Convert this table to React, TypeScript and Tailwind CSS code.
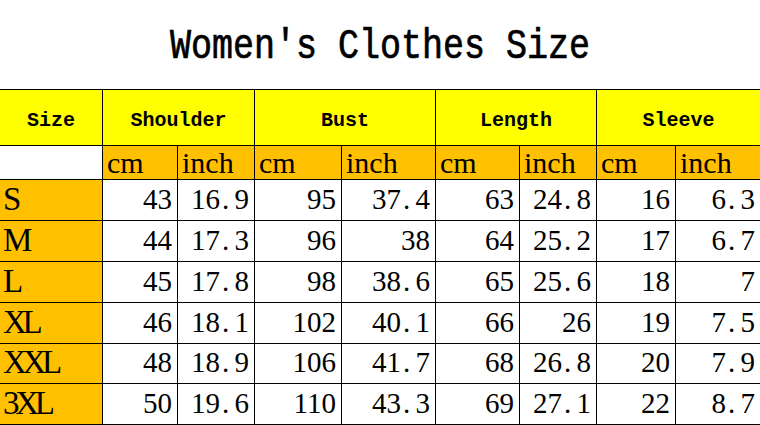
import React from 'react';

const rows: string[][] = [
  ['S', '43', '16.9', '95', '37.4', '63', '24.8', '16', '6.3'],
  ['M', '44', '17.3', '96', '38', '64', '25.2', '17', '6.7'],
  ['L', '45', '17.8', '98', '38.6', '65', '25.6', '18', '7'],
  ['XL', '46', '18.1', '102', '40.1', '66', '26', '19', '7.5'],
  ['XXL', '48', '18.9', '106', '41.7', '68', '26.8', '20', '7.9'],
  ['3XL', '50', '19.6', '110', '43.3', '69', '27.1', '22', '8.7'],
];

const groups = ['Shoulder', 'Bust', 'Length', 'Sleeve'];

const serif = "font-['Liberation_Serif',serif]";
const mono = "font-['Liberation_Mono',monospace]";

// full-width style period, like the original sheet font
function Num({ value }: { value: string }) {
  const [a, b] = value.split('.');
  return (
    <span>
      {a}
      {b !== undefined && (
        <>
          <span className="inline-block w-[0.5em] text-left pl-[2px]">.</span>
          {b}
        </>
      )}
    </span>
  );
}

export default function App() {
  return (
    <div className="w-[760px] h-[425px] overflow-hidden bg-white text-black">
      <div className="h-[89px] flex items-center justify-center">
        <h1 className={`${mono} text-[35px] leading-none scale-y-[1.2] mt-[6px] [-webkit-text-stroke:0.6px_black]`}>Women's Clothes Size</h1>
      </div>
      <div className="grid grid-cols-[103px_75px_77px_87px_94px_84px_77px_79px_85px] grid-rows-[56px_34px_41px_41px_41px_41px_40px_41px] border-t border-black w-[761px]">
        <div className={`${mono} bg-[#ffff00] border-r border-b border-black flex items-center justify-center text-[20px] font-bold pt-[7px]`}>
          Size
        </div>
        {groups.map((g) => (
          <div
            key={g}
            className={`${mono} col-span-2 bg-[#ffff00] border-r border-b border-black flex items-center justify-center text-[20px] font-bold pt-[7px]`}
          >
            {g}
          </div>
        ))}

        <div className="bg-white border-r border-b border-black" />
        {groups.map((g) => (
          <React.Fragment key={g + '-units'}>
            <div className={`${serif} bg-[#ffc000] border-r border-b border-black flex items-end pl-[4px] text-[30px] leading-none pb-[1px]`}>
              cm
            </div>
            <div className={`${serif} bg-[#ffc000] border-r border-b border-black flex items-end pl-[4px] text-[30px] leading-none pb-[1px]`}>
              inch
            </div>
          </React.Fragment>
        ))}

        {rows.map((r) => (
          <React.Fragment key={r[0]}>
            <div className={`${serif} bg-[#ffc000] border-r border-b border-black flex items-end pl-[3px] pb-[4px] text-[33px] leading-none tracking-[-0.13em]`}>
              {r[0]}
            </div>
            {r.slice(1).map((v, i) => (
              <div
                key={i}
                className={`${serif} bg-white border-r border-b border-black flex items-end justify-end pr-[5px] pb-[6px] text-[29px] leading-none`}
              >
                <Num value={v} />
              </div>
            ))}
          </React.Fragment>
        ))}
      </div>
    </div>
  );
}
